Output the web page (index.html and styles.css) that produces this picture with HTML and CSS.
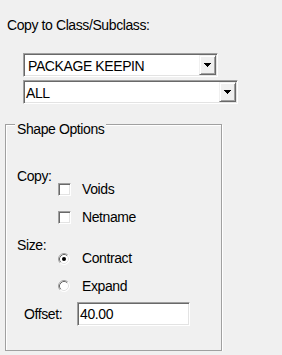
FILE: index.html
```html
<!DOCTYPE html>
<html>
<head>
	<meta charset="UTF-8">
	<title>Copy to Class/Subclass</title>
	<link rel="stylesheet" href="styles.css">
</head>
<body>
	<div class="panel">
		<div class="caption">Copy to Class/Subclass:</div>
		<!-- class / subclass pickers -->
		<div class="combos">
			<div class="combo combo-class">
				<span class="combo-text">PACKAGE KEEPIN</span>
				<span class="combo-btn"><svg width="7" height="4" viewBox="0 0 7 4"><rect x="0" y="0" width="7" height="1"/><rect x="1" y="1" width="5" height="1"/><rect x="2" y="2" width="3" height="1"/><rect x="3" y="3" width="1" height="1"/></svg></span>
			</div>
			<div class="combo combo-sub">
				<span class="combo-text">ALL</span>
				<span class="combo-btn"><svg width="7" height="4" viewBox="0 0 7 4"><rect x="0" y="0" width="7" height="1"/><rect x="1" y="1" width="5" height="1"/><rect x="2" y="2" width="3" height="1"/><rect x="3" y="3" width="1" height="1"/></svg></span>
			</div>
		</div>
		<!-- shape options group -->
		<div class="group">
			<div class="legend">Shape Options</div>
			<div class="section sec-copy">
				<div class="label">Copy:</div>
				<div class="options">
					<div class="option"><span class="check"></span>Voids</div>
					<div class="option"><span class="check"></span>Netname</div>
				</div>
			</div>
			<div class="section sec-size">
				<div class="label">Size:</div>
				<div class="options">
					<div class="option"><svg class="radio" width="12" height="12" viewBox="0 0 12 12"><circle cx="6" cy="6" r="5.5" fill="#fff"/><path d="M2.11 9.89 A5.5 5.5 0 0 1 9.89 2.11" fill="none" stroke="#a0a0a0"/><path d="M2.82 9.18 A4.5 4.5 0 0 1 9.18 2.82" fill="none" stroke="#696969"/><path d="M9.89 2.11 A5.5 5.5 0 0 1 2.11 9.89" fill="none" stroke="#fff"/><path d="M9.18 2.82 A4.5 4.5 0 0 1 2.82 9.18" fill="none" stroke="#e3e3e3"/><circle cx="6" cy="6" r="2" fill="#000"/></svg>Contract</div>
					<div class="option"><svg class="radio" width="12" height="12" viewBox="0 0 12 12"><circle cx="6" cy="6" r="5.5" fill="#fff"/><path d="M2.11 9.89 A5.5 5.5 0 0 1 9.89 2.11" fill="none" stroke="#a0a0a0"/><path d="M2.82 9.18 A4.5 4.5 0 0 1 9.18 2.82" fill="none" stroke="#696969"/><path d="M9.89 2.11 A5.5 5.5 0 0 1 2.11 9.89" fill="none" stroke="#fff"/><path d="M9.18 2.82 A4.5 4.5 0 0 1 2.82 9.18" fill="none" stroke="#e3e3e3"/></svg>Expand</div>
				</div>
			</div>
			<div class="offset">
				<span class="offset-label">Offset:</span>
				<span class="field">40.00</span>
			</div>
		</div>
	</div>
</body>
</html>
```

FILE: styles.css
```css
body{margin:0;padding:0;background:#f0f0f0;color:#000;font:14px/15px "Liberation Sans",Arial,sans-serif;letter-spacing:-0.4px;}
.panel{padding:18px 0 0 5px;}
.caption{padding-left:2px;}
.combos{margin:20px 0 0 18px;display:flex;flex-direction:column;gap:3px;}
.combo{display:flex;height:24px;box-sizing:border-box;background:#fff;padding:1px;border:1px solid;border-color:#a0a0a0 #fff #fff #a0a0a0;box-shadow:inset 1px 1px #696969,inset -1px -1px #e3e3e3;}
.combo-class{width:195px;}
.combo-sub{width:215px;}
.combo-text{flex:1;line-height:22px;padding-left:3px;white-space:nowrap;}
.combo-sub .combo-text{padding-left:1px;}
.combo-btn{width:17px;box-sizing:border-box;background:#f0f0f0;border:1px solid;border-color:#f0f0f0 #696969 #696969 #f0f0f0;box-shadow:inset 1px 1px #fff,inset -1px -1px #a0a0a0;display:flex;align-items:center;justify-content:center;}
.combo-btn svg{display:block;fill:#000;shape-rendering:crispEdges;}
.group{margin-top:20px;width:217px;height:227px;box-sizing:border-box;border:1px solid #a0a0a0;box-shadow:1px 1px 0 #fff,inset 1px 1px 0 #fff;padding-left:11px;}
.legend{margin:-3px 0 0 -2px;padding:0 2px;width:fit-content;background:#f0f0f0;}
.section{display:flex;}
.sec-copy{margin-top:32px;}
.sec-size{margin-top:13.5px;}
.label{width:41px;}
.options{padding-top:13px;display:flex;flex-direction:column;gap:12.5px;}
.option{display:flex;align-items:center;gap:11px;height:15px;}
.check{width:13px;height:13px;box-sizing:border-box;background:#fff;border:1px solid;border-color:#a0a0a0 #fff #fff #a0a0a0;box-shadow:inset 1px 1px #696969,inset -1px -1px #e3e3e3;}
.radio{display:block;margin:0 1px 0 0;}
.offset{display:flex;align-items:center;margin:8.5px 0 0 7px;}
.offset-label{width:53px;}
.field{width:113px;height:24px;box-sizing:border-box;background:#fff;padding:1px 1px 1px 2px;line-height:20px;border:1px solid;border-color:#a0a0a0 #fff #fff #a0a0a0;box-shadow:inset 1px 1px #696969,inset -1px -1px #e3e3e3;}
```
